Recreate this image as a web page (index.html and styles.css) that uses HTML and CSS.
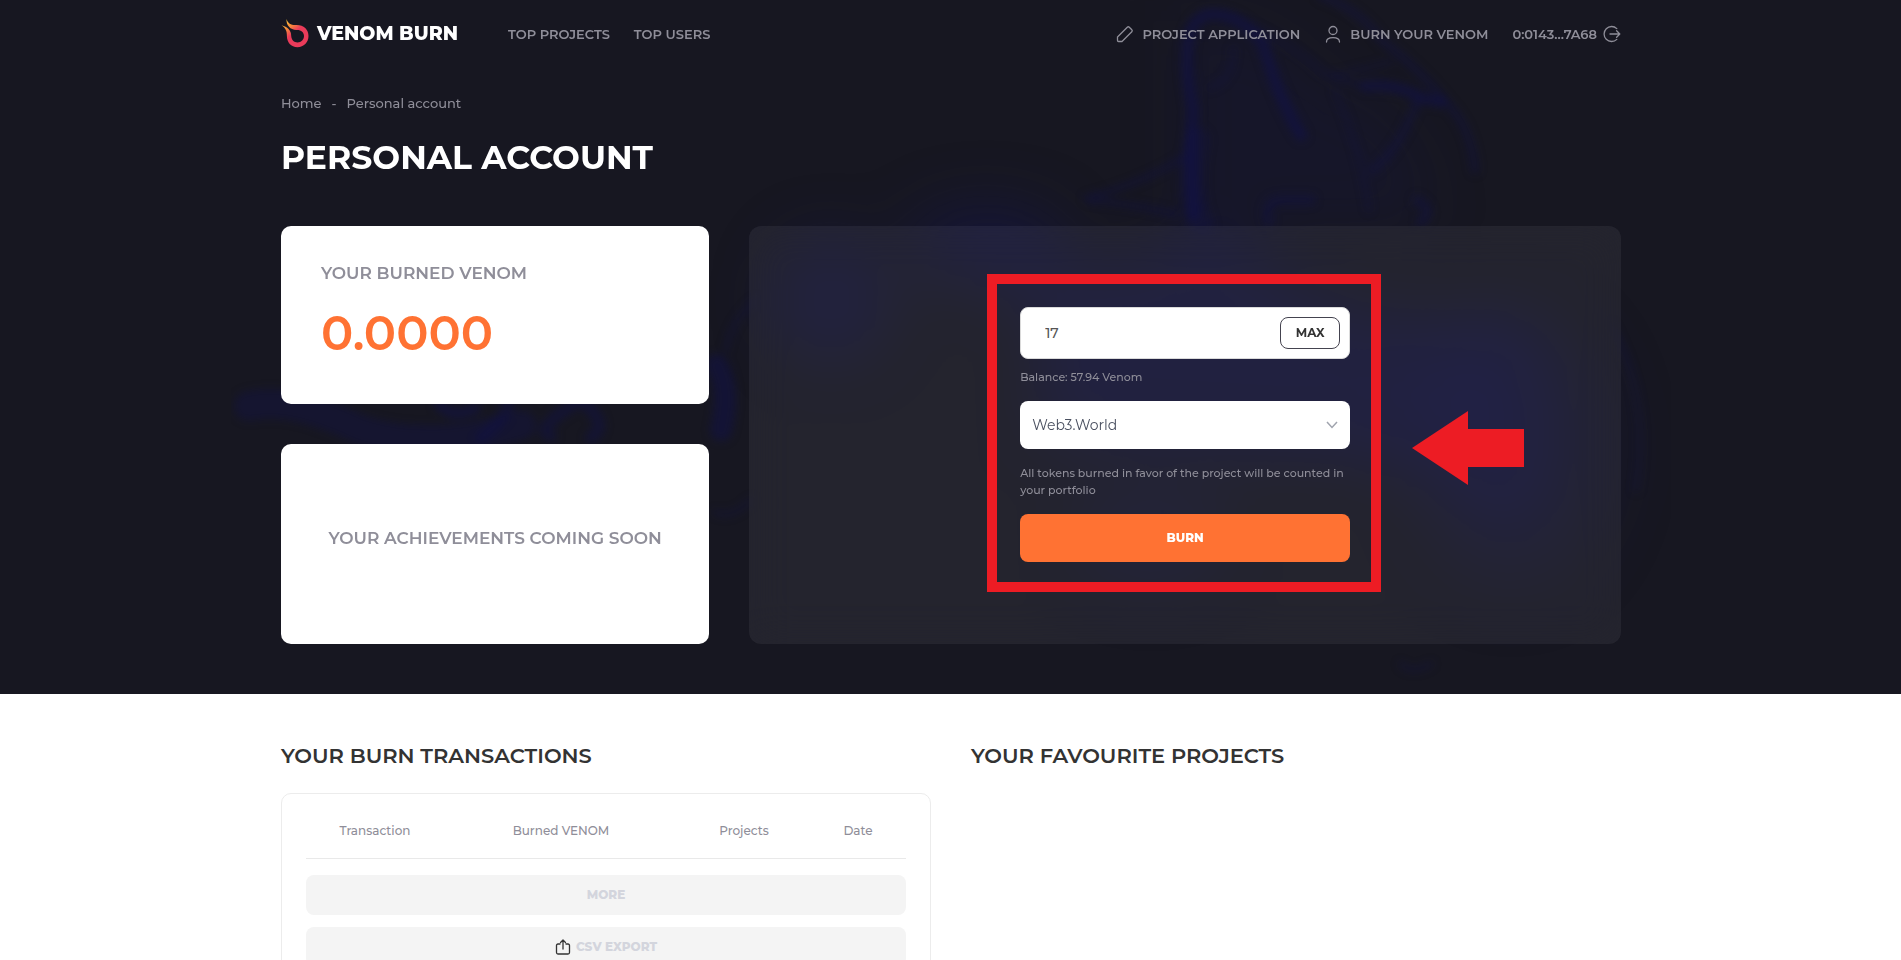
FILE: index.html
```html
<!DOCTYPE html>
<html lang="en">
<head>
<meta charset="utf-8">
<meta name="viewport" content="width=device-width, initial-scale=1">
<title>Venom Burn - Personal account</title>
<link rel="stylesheet" href="styles.css">
</head>
<body>
<div class="hero">
  <svg class="smoke" viewBox="0 0 1440 694" aria-hidden="true">
    <defs>
      <filter id="soft" x="-20%" y="-20%" width="140%" height="140%" color-interpolation-filters="sRGB"><feGaussianBlur stdDeviation="4"/></filter>
      <filter id="haze" x="-40%" y="-40%" width="180%" height="180%" color-interpolation-filters="sRGB"><feGaussianBlur stdDeviation="30"/></filter>
    </defs>
    <g filter="url(#haze)" fill="#12125a">
      <path opacity=".16" d="M950 20 Q1060 20 1090 90 Q1190 100 1200 226 L950 226 Z"/>
      <ellipse opacity=".38" cx="755" cy="245" rx="80" ry="40"/>
      <ellipse opacity=".34" cx="600" cy="300" rx="60" ry="65"/>
      <path opacity=".36" d="M770 260 Q900 290 990 220 Q1060 330 1290 320 Q1340 420 1300 520 Q1260 550 1220 470 L1120 460 L800 440 Q830 340 770 260Z"/>
      <ellipse opacity=".16" cx="1280" cy="450" rx="110" ry="150"/>
      <ellipse opacity=".24" cx="920" cy="540" rx="80" ry="50"/>
    </g>
    <g filter="url(#soft)" fill="none" stroke="#10104e" stroke-linecap="round">
      <path opacity=".5" stroke-width="12" d="M963 215 Q958 150 962 110 Q944 18 980 14 Q1010 14 1032 44 Q1048 100 1070 135"/>
      <path opacity=".25" stroke-width="26" d="M970 225 Q955 190 966 140"/>
      <path opacity=".35" stroke-width="4" d="M1002 48 Q1004 80 978 88 M1020 26 Q1070 50 1090 72 Q1110 82 1130 84"/>
      <path opacity=".5" stroke-width="11" d="M1134 86 Q1170 84 1190 98 L1210 102"/>
      <path opacity=".35" stroke-width="8" d="M1090 -4 Q1130 10 1150 40 Q1190 70 1220 108 Q1240 130 1244 170 M1186 102 Q1168 150 1142 170"/>
      <path opacity=".25" stroke-width="5" d="M1102 76 L1160 62 M1104 90 Q1130 150 1138 210"/>
      <path opacity=".4" stroke-width="5" d="M855 198 Q910 184 952 158 M858 200 Q900 204 945 214"/>
      <path opacity=".35" stroke-width="10" d="M1038 222 Q1032 200 1050 200 L1080 200 M1186 200 Q1204 210 1190 222"/>
      <path opacity=".35" stroke-width="30" d="M18 406 Q60 396 130 430 Q200 452 290 425"/>
      <path opacity=".5" stroke-width="10" d="M208 404 Q220 420 245 408"/>
      <path opacity=".4" stroke-width="12" d="M250 438 Q285 410 275 396 M320 436 Q300 430 350 400 Q380 424 360 438"/>
      <path opacity=".45" stroke-width="22" d="M486 365 Q500 390 490 430"/>
      <path opacity=".3" stroke-width="5" d="M484 512 Q500 520 520 500 M495 350 Q500 320 525 300 M1380 325 Q1420 400 1405 490 M1170 664 Q1180 675 1200 664"/>
    </g>
  </svg>

  <header class="container topbar">
    <a class="logo" href="#">
      <svg class="logo-mark" viewBox="0 0 28 30" aria-hidden="true">
        <defs><linearGradient id="flame" x1="0" y1="0" x2=".55" y2=".7"><stop offset="0" stop-color="#ffe13a"/><stop offset=".45" stop-color="#f78a3c"/><stop offset=".75" stop-color="#ea3b5a"/></linearGradient></defs>
        <path fill="url(#flame)" d="M5.500 0C7 4.500 10 6.300 15 6.100C22.500 5.800 27.500 10.500 27.500 17C27.500 23.300 22.700 28.200 16.500 28.200C10 28.200 5.800 23.200 5.900 17C6 12 4.500 9 .5 6.300C6.500 7.800 10.200 11.500 10.200 16.800C10.400 21 13 23.500 16.500 23.500C20.400 23.500 23 20.500 23 17C23 13.200 20 10.600 15.500 10.900C9.500 11 5 6.500 5.500 0Z"/>
      </svg>
      <span>VENOM BURN</span>
    </a>
    <nav class="nav" aria-label="Main">
      <a href="#">TOP PROJECTS</a>
      <a href="#">TOP USERS</a>
    </nav>
    <nav class="nav nav-user" aria-label="Account">
      <a href="#">
        <svg class="icon" viewBox="0 0 18 18" aria-hidden="true"><path d="M1.500 12L11.300 2.200Q12.300 1.200 13.300 2.200L15.800 4.700Q16.800 5.700 15.800 6.700L6 16.500H2.500Q1.500 16.500 1.500 15.500Z"/></svg>
        PROJECT APPLICATION
      </a>
      <a href="#">
        <svg class="icon" viewBox="0 0 18 18" aria-hidden="true"><circle cx="9" cy="5.500" r="4"/><path d="M2.500 17C2.500 14.200 5 12.600 9 12.600S15.500 14.200 15.500 17"/></svg>
        BURN YOUR VENOM
      </a>
      <a class="wallet" href="#">
        0:0143...7A68
        <svg class="icon" viewBox="0 0 18 18" aria-hidden="true"><path d="M13.800 3.600A7.500 7.500 0 1 0 13.800 14.400M7 9H16.800M13.600 5.800L16.800 9L13.600 12.200"/></svg>
      </a>
    </nav>
  </header>

  <main class="container account">
    <nav class="crumbs" aria-label="Breadcrumb"><a href="#">Home</a><span>-</span><span>Personal account</span></nav>
    <h1>PERSONAL ACCOUNT</h1>
    <div class="cards">
      <section class="card burned">
        <h2 class="label">YOUR BURNED VENOM</h2>
        <p class="amount">0.0000</p>
      </section>
      <section class="card achievements">
        <h2 class="label">YOUR ACHIEVEMENTS COMING SOON</h2>
      </section>
      <section class="panel">
        <form class="burn-form">
          <div class="amount-field">
            <input type="text" inputmode="decimal" value="17" aria-label="Amount">
            <button type="button" class="max">MAX</button>
          </div>
          <p class="hint balance">Balance: 57.94 Venom</p>
          <div class="select-field">
            <select aria-label="Project"><option>Web3.World</option></select>
            <svg class="chevron" viewBox="0 0 12 8" aria-hidden="true"><path d="M1 1L6 6.500L11 1"/></svg>
          </div>
          <p class="hint note">All tokens burned in favor of the project will be counted in your portfolio</p>
          <button type="button" class="burn">BURN</button>
          <div class="highlight"></div>
          <svg class="arrow" viewBox="0 0 112 74" aria-hidden="true"><path d="M0 37L56 0V18H112V56H56V74Z"/></svg>
        </form>
      </section>
    </div>
  </main>
</div>

<div class="container lower">
  <section>
    <h2 class="heading">YOUR BURN TRANSACTIONS</h2>
    <div class="history">
      <table>
        <thead><tr><th class="c-tx">Transaction</th><th class="c-amount">Burned VENOM</th><th class="c-project">Projects</th><th>Date</th></tr></thead>
      </table>
      <button type="button" class="wide" disabled>MORE</button>
      <button type="button" class="wide" disabled>
        <svg class="export" viewBox="0 0 16 16" aria-hidden="true"><path d="M5 5H3Q1.500 5 1.500 6.500V13.500Q1.500 15 3 15H13Q14.500 15 14.500 13.500V6.500Q14.500 5 13 5H11M8 10V1.200M5.500 3.500L8 1L10.500 3.500"/></svg>
        CSV EXPORT
      </button>
    </div>
  </section>
  <section>
    <h2 class="heading">YOUR FAVOURITE PROJECTS</h2>
  </section>
</div>
</body>
</html>
```
FILE: styles.css
```css
* { box-sizing: border-box; }
body { margin: 0; background: #fff; color: #333; font-family: Montserrat, Inter, "Open Sans", sans-serif; }
h1, h2, p { margin: 0; }
a { color: inherit; text-decoration: none; }
button, input, select { font: inherit; margin: 0; }
svg { display: block; }

.container { width: 100%; max-width: 1381px; margin: 0 auto; padding: 0 20px 0 21px; }

.hero { position: relative; background: #171721; padding-bottom: 50px; overflow: hidden; }
.smoke { position: absolute; top: 0; left: 50%; width: 1440px; margin-left: -720px; }

.topbar { position: relative; display: flex; align-items: center; height: 67px; }
.logo { display: flex; align-items: center; gap: 8px; color: #fff; font-size: 19px; font-weight: 800; white-space: nowrap; }
.logo-mark { width: 28px; height: 30px; }
.nav { display: flex; gap: 24px; margin-left: 50px; color: #8f8e99; font-size: 13px; font-weight: 600; white-space: nowrap; }
.nav a { display: flex; align-items: center; gap: 8px; }
.nav-user { margin-left: auto; }
.nav .wallet { gap: 6px; }
.icon { width: 18px; height: 18px; fill: none; stroke: #8f8e99; stroke-width: 1.3; stroke-linejoin: round; stroke-linecap: round; }

.account { position: relative; padding-top: 26px; }
.crumbs { display: flex; gap: 10px; color: #8f8e99; font-size: 13px; line-height: 20px; font-weight: 500; }
h1 { margin-top: 24px; color: #fff; font-size: 33px; line-height: 40px; font-weight: 700; }

.cards { display: grid; grid-template-columns: 428fr 871fr; grid-template-rows: 178px 200px; gap: 40px; margin-top: 49px; }
.card { background: #fff; border-radius: 10px; }
.burned { padding: 36px 40px; }
.label { color: #8f8e99; font-size: 17px; line-height: 22px; font-weight: 600; }
.amount { margin-top: 19px; color: #ff7233; font-size: 48px; line-height: 60px; font-weight: 600; }
.achievements { display: flex; align-items: center; justify-content: center; padding-bottom: 12px; }
.panel { grid-column: 2; grid-row: 1 / span 2; display: flex; align-items: center; justify-content: center; padding-bottom: 2px; border-radius: 12px; background: rgba(255, 255, 255, .06); backdrop-filter: blur(20px); }

.burn-form { position: relative; width: 330px; }
.amount-field { display: flex; align-items: center; height: 52px; padding: 0 9px 0 24px; border: 1px solid #dadada; border-radius: 8px; background: #fff; }
.amount-field input { flex: 1; min-width: 0; padding: 0; border: 0; outline: 0; background: none; color: #555; font-size: 14px; font-weight: 500; }
.max { width: 60px; height: 32px; padding: 0; border: 1px solid #44434f; border-radius: 8px; background: #fff; color: #333; font-size: 12px; font-weight: 700; }
.hint { color: #8f8e99; font-size: 11px; line-height: 17px; font-weight: 500; }
.balance { margin-top: 10px; }
.select-field { position: relative; margin-top: 15px; }
.select-field select { display: block; width: 100%; height: 48px; padding: 0 12px; border: 0; border-radius: 8px; background: #fff; color: #4a5060; font-size: 14px; appearance: none; }
.chevron { position: absolute; top: 20px; right: 12px; width: 12px; height: 8px; fill: none; stroke: #a0a4ae; stroke-width: 1.5; pointer-events: none; }
.note { margin-top: 16px; }
.burn { display: block; width: 100%; height: 48px; margin-top: 15px; border: 0; border-radius: 8px; background: #ff7233; color: #fff; font-size: 12px; font-weight: 800; }
.highlight { position: absolute; inset: -33px -31px -30px -33px; border: 10px solid #ed1c24; pointer-events: none; }
.arrow { position: absolute; left: 392px; top: 104px; width: 112px; height: 74px; fill: #ed1c24; pointer-events: none; }

.lower { display: grid; grid-template-columns: 1fr 1fr; gap: 40px; padding-top: 49px; padding-bottom: 40px; }
.heading { font-size: 21px; line-height: 26px; font-weight: 600; }
.history { margin-top: 24px; padding: 24px; border: 1px solid #ececec; border-radius: 10px; }
table { width: 100%; table-layout: fixed; border-collapse: collapse; }
th { height: 40px; padding: 0 0 14px; border-bottom: 1px solid #e9e9e9; color: #8f8e99; font-size: 12px; font-weight: 500; }
.c-tx { width: 23%; }
.c-amount { width: 39%; }
.c-project { width: 22%; }
.wide { display: flex; align-items: center; justify-content: center; gap: 5px; width: 100%; height: 40px; margin-top: 12px; border: 0; border-radius: 8px; background: #f4f4f4; color: #d3d5dd; font-size: 12px; font-weight: 800; }
table + .wide { margin-top: 16px; }
.export { width: 16px; height: 16px; fill: none; stroke: #333; stroke-width: 1.3; stroke-linejoin: round; stroke-linecap: round; }
```
